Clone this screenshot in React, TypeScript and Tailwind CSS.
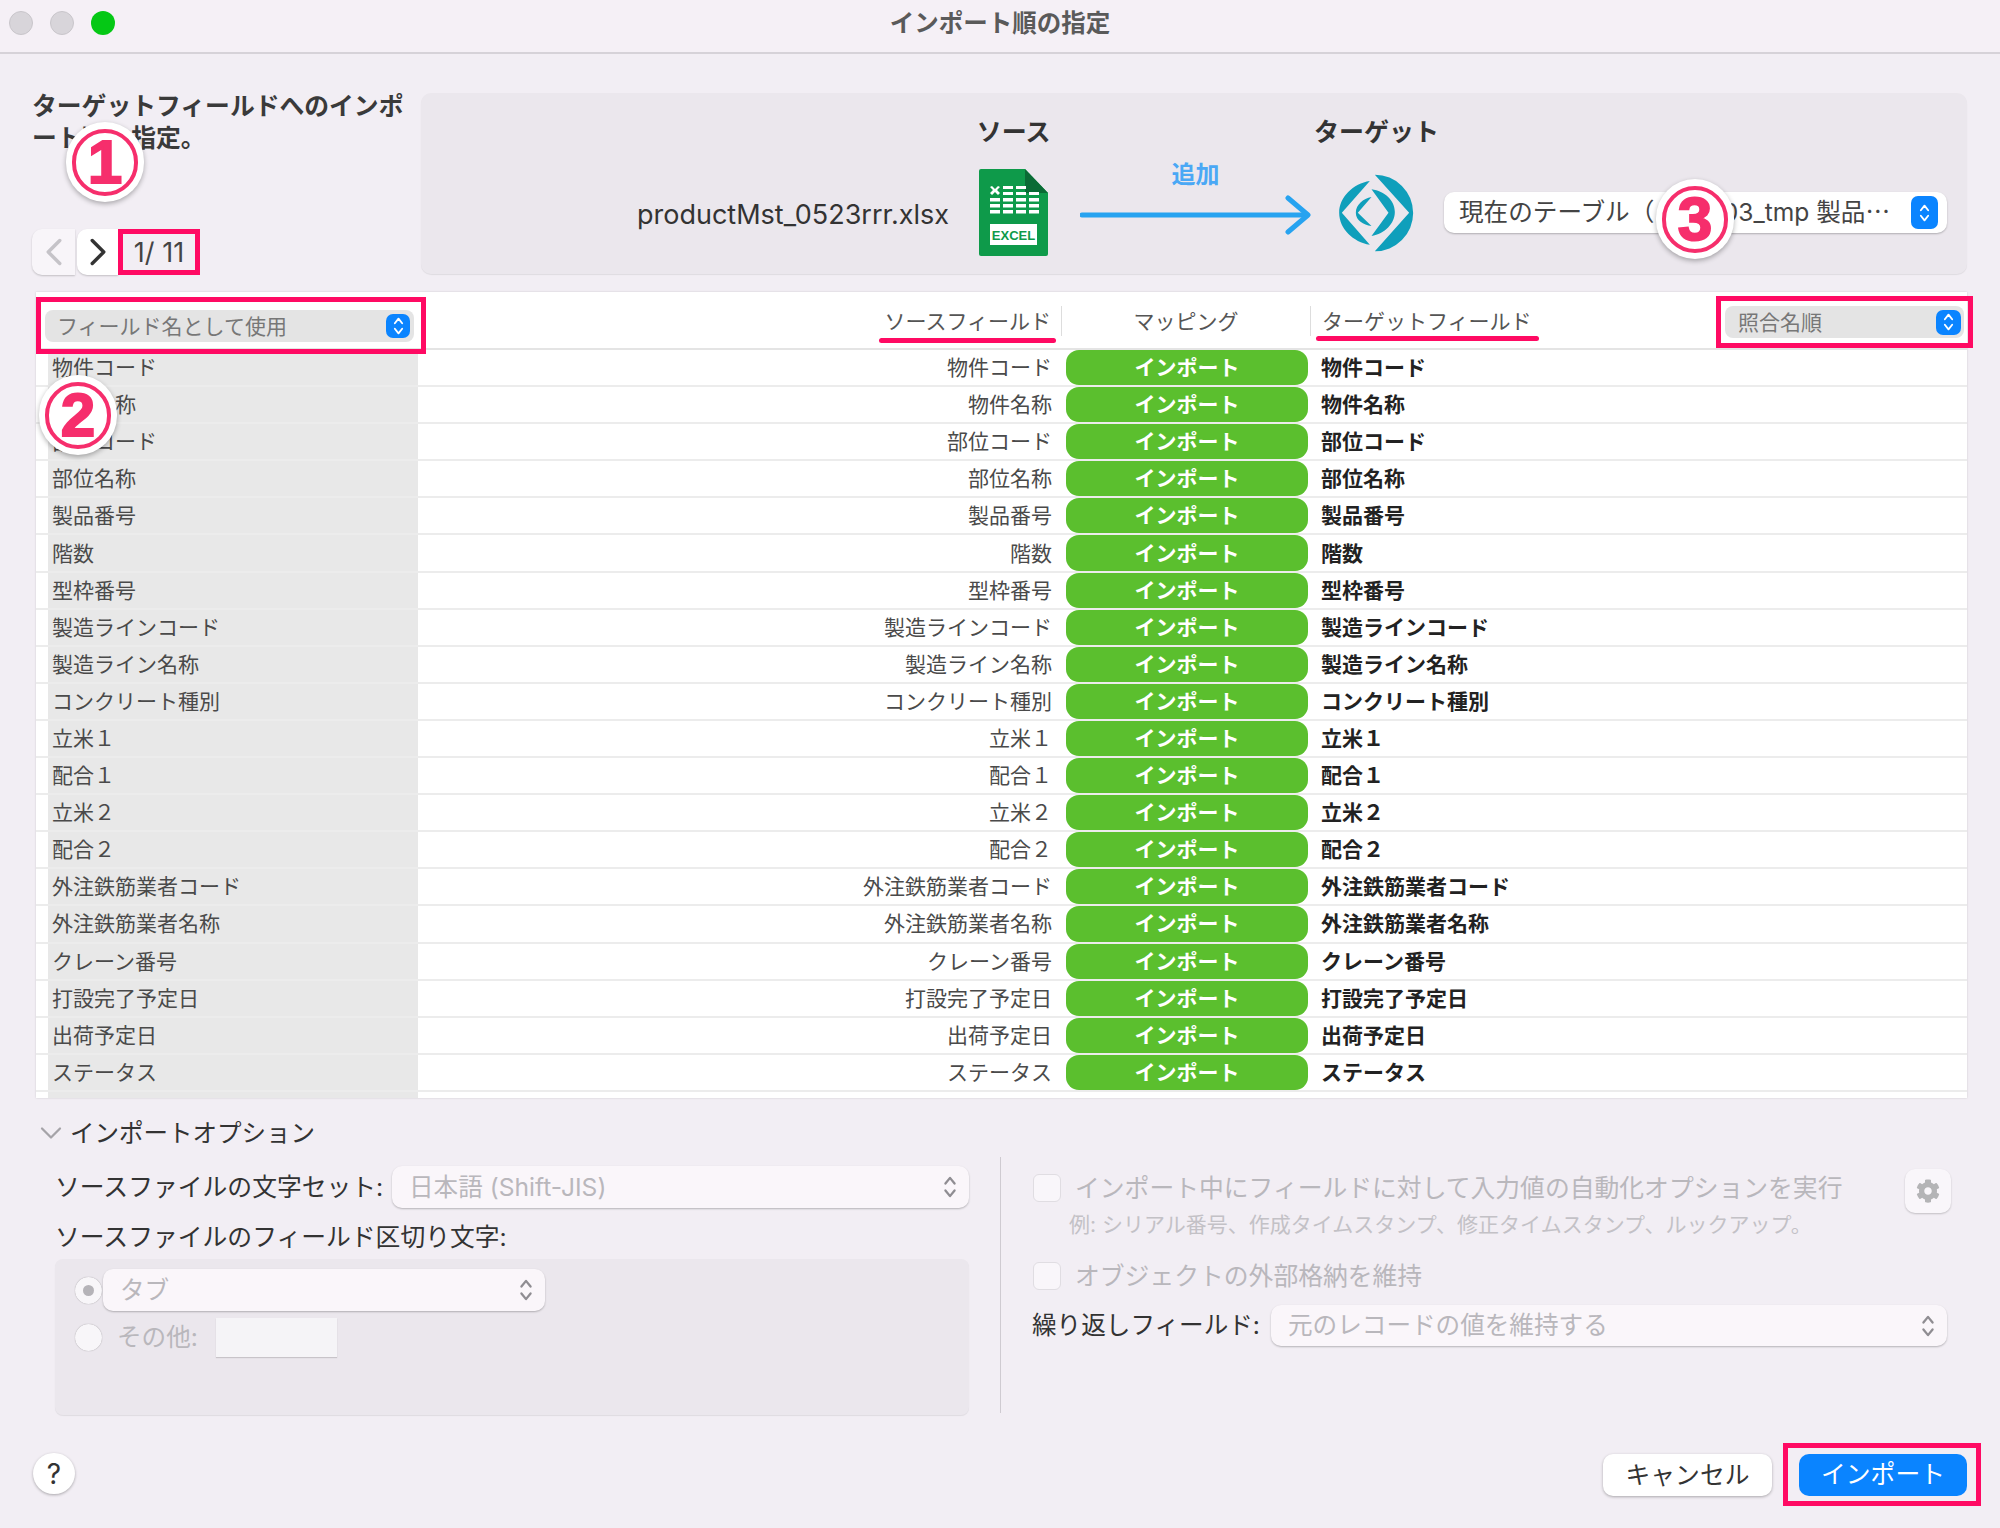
import React from "react";
import { FaCog } from "react-icons/fa";
import { ChevronDown, ChevronLeft, ChevronRight } from "lucide-react";

const FIELDS = [
  "物件コード",
  "物件名称",
  "部位コード",
  "部位名称",
  "製品番号",
  "階数",
  "型枠番号",
  "製造ラインコード",
  "製造ライン名称",
  "コンクリート種別",
  "立米１",
  "配合１",
  "立米２",
  "配合２",
  "外注鉄筋業者コード",
  "外注鉄筋業者名称",
  "クレーン番号",
  "打設完了予定日",
  "出荷予定日",
  "ステータス",
];

const Arrows = ({ color, className = "" }: { color: string; className?: string }) => (
  <svg viewBox="0 0 14 24" className={className} fill="none" stroke={color} strokeWidth="2" strokeLinecap="round" strokeLinejoin="round">
    <path d="M3 9l4-5 4 5" />
    <path d="M3 15l4 5 4-5" />
  </svg>
);

const Stepper = ({ className = "" }: { className?: string }) => (
  <div className={`flex items-center justify-center rounded-[7px] bg-[#0a84ff] ${className}`}>
    <Arrows color="#ffffff" className="h-[22px] w-[13px]" />
  </div>
);

const Badge = ({ digit, className = "" }: { digit: string; className?: string }) => (
  <div className={`absolute z-20 flex h-[80px] w-[78px] items-center justify-center rounded-full bg-white shadow-[0_2px_5px_rgba(0,0,0,0.3)] ${className}`}>
    <div className="flex h-[67px] w-[66px] items-center justify-center rounded-full border-4 border-[#f62e6c]">
      <span className="text-[62px] leading-none font-bold text-[#f62e6c] [-webkit-text-stroke:2px_#f62e6c] font-['Liberation_Sans',sans-serif]">{digit}</span>
    </div>
  </div>
);

const PinkFrame = ({ className = "" }: { className?: string }) => (
  <div className={`pointer-events-none absolute z-10 border-[5px] border-[#ff0a63] ${className}`} />
);

const DisabledSelect = ({ label, className = "" }: { label: string; className?: string }) => (
  <div className={`flex items-center justify-between rounded-[10px] bg-[#faf6fa] pr-[11px] pl-[17px] text-[24.6px] leading-none text-[#b9b7bc] shadow-[0_1px_2px_rgba(0,0,0,0.25)] ${className}`}>
    <span>{label}</span>
    <Arrows color="#8f8d92" className="h-[30px] w-[16px]" />
  </div>
);

const ExcelIcon = () => (
  <svg viewBox="0 0 69 87" className="h-[87px] w-[69px]">
    <path d="M2 0H46L69 24V85a2 2 0 0 1-2 2H2a2 2 0 0 1-2-2V2a2 2 0 0 1 2-2z" fill="#0e9a4a" />
    <path d="M46 0L69 24H46z" fill="#0a6b35" />
    <g fill="#ffffff">
      <path d="M11 18l2-1 3 3 3-3 2 1-3 3 3 3-2 2-3-3-3 3-2-2 3-3z" />
      <rect x="24" y="17" width="10" height="3" />
      <rect x="37" y="17" width="10" height="3" />
      <rect x="24" y="23" width="10" height="3" />
      <rect x="37" y="23" width="10" height="3" />
      <rect x="50" y="23" width="10" height="3" />
      {[29, 35, 41].map((y) => (
        <g key={y}>
          <rect x="11" y={y} width="10" height="3.5" />
          <rect x="24" y={y} width="10" height="3.5" />
          <rect x="37" y={y} width="10" height="3.5" />
          <rect x="50" y={y} width="10" height="3.5" />
        </g>
      ))}
      <rect x="11" y="55" width="47" height="21" />
    </g>
    <text x="34.5" y="70.5" textAnchor="middle" fontSize="13" fontWeight="700" fill="#0e9a4a" fontFamily="Liberation Sans, sans-serif">
      EXCEL
    </text>
  </svg>
);

const FileMakerLogo = () => (
  <svg viewBox="25 23 230 240" className="h-[80px] w-[77px]" fill="#0f9fbb">
    <path d="M135 28A115 115 0 0 1 135 258L238 142Z" />
    <path d="M120 47C70 55 28 95 28 142C28 190 70 230 120 238L36 142Z" />
    <path d="M125 72C165 78 195 105 195 140C195 175 165 205 125 212L176 142Z" />
    <path d="M125 95C100 100 78 118 78 142C78 165 100 178 125 182L84 142Z" />
  </svg>
);

const Checkbox = () => (
  <div className="h-[28px] w-[28px] shrink-0 rounded-[6px] border border-[#e0dde2] bg-[#f9f6fa]" />
);

const FieldRow = ({ name }: { name: string }) => (
  <div className="flex h-[37.1px] items-stretch border-b-2 border-[#ececec] text-[21px] leading-none">
    <div className="w-[12px]" />
    <div className="flex w-[370px] items-center bg-[#e8e8e8] pl-[4px] text-[#4a4a4a]">{name}</div>
    <div className="flex w-[648px] items-center justify-end pr-[14px] text-[#4a4a4a]">{name}</div>
    <div className="flex w-[242px] items-center justify-center rounded-[13px] bg-[#5bbf2e] font-bold text-white">インポート</div>
    <div className="flex flex-1 items-center pl-[13px] font-bold text-[#222222]">{name}</div>
  </div>
);

export default function App() {
  return (
    <div className="relative h-[1528px] w-[2000px] overflow-hidden bg-[#f2eef4] font-['Inter','Noto_Sans_CJK_JP',sans-serif] text-[#333333]">
      {/* Title bar */}
      <div className="relative flex h-[54px] items-center justify-center border-b-2 border-[#d6d2d8] bg-[#f5f0f6] pb-[6px]">
        <div className="absolute top-[11px] left-[9px] flex gap-[17px]">
          <div className="h-[24px] w-[24px] rounded-full border border-[#c9c6cb] bg-[#d8d5da]" />
          <div className="h-[24px] w-[24px] rounded-full border border-[#c9c6cb] bg-[#d8d5da]" />
          <div className="h-[24px] w-[24px] rounded-full bg-[#05c815]" />
        </div>
        <span className="text-[24.5px] font-bold text-[#5a5a5a]">インポート順の指定</span>
      </div>

      {/* Source and target summary */}
      <div className="flex h-[238px] pt-[39px]">
        <div className="w-[421px] pl-[32px]">
          <div className="-mt-[3px] h-[64px] w-[380px] text-[24.8px] leading-[32px] font-bold text-[#3a3a3a]">
            ターゲットフィールドへのインポート順を指定。
          </div>
          <div className="mt-[75px] flex items-center">
            <div className="flex h-[46px] w-[43px] items-center justify-center rounded-l-[10px] bg-[#f8f5f9] shadow-[0_1px_2px_rgba(0,0,0,0.2)]">
              <ChevronLeft className="h-[46px] w-[46px] shrink-0 text-[#c5c3c8]" strokeWidth={1.8} />
            </div>
            <div className="ml-[2px] flex h-[46px] w-[41px] items-center justify-center rounded-l-[10px] bg-white shadow-[0_1px_2px_rgba(0,0,0,0.2)]">
              <ChevronRight className="h-[46px] w-[46px] shrink-0 text-[#333333]" strokeWidth={1.8} />
            </div>
            <div className="flex h-[46px] w-[82px] items-center justify-center border-[5px] border-[#ff0a63] text-[27px] leading-none text-[#444444]">
              1/ 11
            </div>
          </div>
        </div>
        <div className="mr-[33px] flex h-[181px] flex-1 rounded-[10px] bg-[#ebe7ed] pl-[216px] shadow-[0_1px_1px_rgba(0,0,0,0.08)]">
          <div className="w-[320px] pt-[106px] text-[27px] leading-[32px] whitespace-nowrap text-[#333333]">
            productMst_0523rrr.xlsx
          </div>
          <div className="ml-[22px] flex w-[69px] flex-col items-center pt-[23px]">
            <span className="text-[25px] leading-[32px] font-bold whitespace-nowrap text-[#333333]">ソース</span>
            <div className="mt-[21px]">
              <ExcelIcon />
            </div>
          </div>
          <div className="ml-[32px] flex w-[231px] flex-col items-center pt-[66px]">
            <span className="text-[24px] leading-[32px] font-bold text-[#4aa8f5]">追加</span>
            <svg viewBox="0 0 231 40" className="mt-[4px] h-[40px] w-[231px]" fill="none" stroke="#27a3f0" strokeWidth="5" strokeLinecap="round" strokeLinejoin="round">
              <path d="M2 20H227" />
              <path d="M208 3L228 20L208 37" />
            </svg>
          </div>
          <div className="ml-[27px] flex w-[77px] flex-col items-center pt-[23px]">
            <span className="text-[25px] leading-[32px] font-bold whitespace-nowrap text-[#333333]">ターゲット</span>
            <div className="mt-[25px]">
              <FileMakerLogo />
            </div>
          </div>
          <div className="mt-[99px] ml-[29px] flex h-[41px] w-[503px] items-center justify-between rounded-[10px] bg-white pr-[9px] pl-[15px] text-[24.6px] leading-none whitespace-nowrap text-[#444444] shadow-[0_1px_2px_rgba(0,0,0,0.25)]">
            <span>現在のテーブル（ T00003_tmp 製品⋯</span>
            <Stepper className="h-[33px] w-[27px]" />
          </div>
        </div>
      </div>

      {/* Field mapping table */}
      <div className="relative ml-[36px] h-[806px] w-[1931px] overflow-hidden bg-white shadow-[0_0_2px_rgba(0,0,0,0.15)]">
        <div className="flex h-[58px] items-start border-b-2 border-[#e4e4e4] text-[21px] leading-none text-[#555555]">
          <div className="w-[382px] pt-[18px] pl-[9px]">
            <div className="flex h-[32px] w-[369px] items-center justify-between rounded-[8px] bg-[#e4e4e4] pr-[4px] pl-[12px] text-[#777777]">
              <span>フィールド名として使用</span>
              <Stepper className="h-[24px] w-[24px]" />
            </div>
          </div>
          <div className="mt-[14px] flex h-[30px] w-[644px] items-center justify-end border-r border-[#dddddd] pr-[10px]">ソースフィールド</div>
          <div className="mt-[14px] flex h-[30px] w-[249px] items-center justify-center border-r border-[#dddddd]">マッピング</div>
          <div className="mt-[14px] flex h-[30px] w-[405px] items-center pl-[11px]">ターゲットフィールド</div>
          <div className="mt-[14px] ml-[9px] flex h-[32px] w-[239px] items-center justify-between rounded-[8px] bg-[#e4e4e4] pr-[3px] pl-[13px] text-[#777777]">
            <span>照合名順</span>
            <Stepper className="h-[25px] w-[25px]" />
          </div>
        </div>
        {FIELDS.map((f) => (
          <FieldRow key={f} name={f} />
        ))}
        <div className="flex h-[6px]">
          <div className="w-[12px]" />
          <div className="w-[370px] bg-[#e8e8e8]" />
        </div>
        <div className="absolute top-[46px] left-[843px] h-[5px] w-[177px] rounded-full bg-[#ff0a63]" />
        <div className="absolute top-[44px] left-[1280px] h-[5px] w-[223px] rounded-full bg-[#ff0a63]" />
      </div>

      {/* Import options */}
      <div className="ml-[33px] flex h-[59px] items-start pt-[19px]">
        <div className="flex h-[32px] items-center">
          <ChevronDown className="h-[36px] w-[36px] shrink-0 text-[#a5a3a8]" strokeWidth={1.5} />
          <span className="ml-[1px] text-[24.5px] leading-none text-[#333333]">インポートオプション</span>
        </div>
      </div>

      <div className="flex h-[258px]">
        <div className="ml-[55px] w-[914px] pt-[9px]">
          <div className="flex h-[42px] items-center">
            <span className="w-[337px] text-[24.8px] leading-none whitespace-nowrap text-[#333333]">ソースファイルの文字セット:</span>
            <DisabledSelect label="日本語 (Shift-JIS)" className="h-[42px] flex-1" />
          </div>
          <div className="mt-[13px] h-[32px] text-[24.8px] leading-[32px] text-[#333333]">ソースファイルのフィールド区切り文字:</div>
          <div className="mt-[6px] h-[156px] rounded-[8px] bg-[#ebe7ed] pt-[10px] pl-[20px] shadow-[0_1px_1px_rgba(0,0,0,0.08)]">
            <div className="flex h-[42px] items-center">
              <div className="flex h-[27px] w-[27px] items-center justify-center rounded-full bg-[#f8f6f9] shadow-[0_0_1px_rgba(0,0,0,0.4)]">
                <div className="h-[11px] w-[11px] rounded-full bg-[#b5b3b8]" />
              </div>
              <DisabledSelect label="タブ" className="ml-[1px] h-[42px] w-[442px] bg-[#f5f4f7]" />
            </div>
            <div className="mt-[7px] flex h-[39px] items-center">
              <div className="h-[27px] w-[27px] rounded-full bg-[#f8f6f9] shadow-[0_0_1px_rgba(0,0,0,0.4)]" />
              <span className="ml-[15px] w-[99px] text-[24.6px] leading-none text-[#b9b7bc]">その他:</span>
              <div className="h-[39px] w-[121px] bg-[#f5f4f7] shadow-[0_1px_1px_rgba(0,0,0,0.15)]" />
            </div>
          </div>
        </div>

        <div className="mt-0 ml-[31px] h-[256px] w-[1px] bg-[#cfcbd1]" />

        <div className="ml-[31px] flex w-[919px] flex-col pt-[12px]">
          <div className="flex items-start">
            <div className="w-[873px]">
              <div className="flex h-[38px] items-center pl-[1px]">
                <Checkbox />
                <span className="ml-[14px] text-[24.8px] leading-none whitespace-nowrap text-[#b9b7bc]">インポート中にフィールドに対して入力値の自動化オプションを実行</span>
              </div>
              <div className="mt-[5px] h-[26px] pl-[37px] text-[21px] leading-[26px] whitespace-nowrap text-[#c3c1c6]">
                例: シリアル番号、作成タイムスタンプ、修正タイムスタンプ、ルックアップ。
              </div>
            </div>
            <div className="flex h-[44px] w-[46px] items-center justify-center rounded-[10px] bg-[#f9f6fa] shadow-[0_1px_2px_rgba(0,0,0,0.2)]">
              <FaCog className="h-[24px] w-[24px] text-[#b4b4b6]" />
            </div>
          </div>
          <div className="mt-[19px] flex h-[38px] items-center pl-[1px]">
            <Checkbox />
            <span className="ml-[14px] text-[24.8px] leading-none text-[#b9b7bc]">オブジェクトの外部格納を維持</span>
          </div>
          <div className="mt-[10px] flex h-[41px] items-center">
            <span className="w-[239px] text-[24.6px] leading-none whitespace-nowrap text-[#333333]">繰り返しフィールド:</span>
            <DisabledSelect label="元のレコードの値を維持する" className="h-[41px] w-[676px]" />
          </div>
        </div>
      </div>

      {/* Footer buttons */}
      <div className="flex h-[119px] items-start pt-[28px] pr-[19px] pl-[33px]">
        <div className="mt-[10px] flex h-[41px] w-[42px] items-center justify-center rounded-full bg-white text-[28px] leading-none text-[#333333] shadow-[0_1px_3px_rgba(0,0,0,0.3)]">
          ?
        </div>
        <div className="mt-[11px] ml-auto flex h-[42px] w-[169px] items-center justify-center rounded-[10px] bg-white text-[24.8px] leading-none text-[#333333] shadow-[0_1px_3px_rgba(0,0,0,0.3)]">
          キャンセル
        </div>
        <div className="ml-[11px] flex h-[63px] w-[198px] items-center justify-center border-[5px] border-[#ff0a63] pl-[2px]">
          <div className="flex h-[42px] w-[168px] items-center justify-center rounded-[10px] bg-[#0a84ff] text-[24.8px] leading-none text-white">
            インポート
          </div>
        </div>
      </div>

      {/* Annotation overlays */}
      <PinkFrame className="top-[297px] left-[36px] h-[57px] w-[390px]" />
      <PinkFrame className="top-[296px] left-[1716px] h-[52px] w-[257px]" />
      <Badge digit="1" className="top-[122px] left-[66px]" />
      <Badge digit="2" className="top-[375px] left-[39px]" />
      <Badge digit="3" className="top-[179px] left-[1656px]" />
    </div>
  );
}
